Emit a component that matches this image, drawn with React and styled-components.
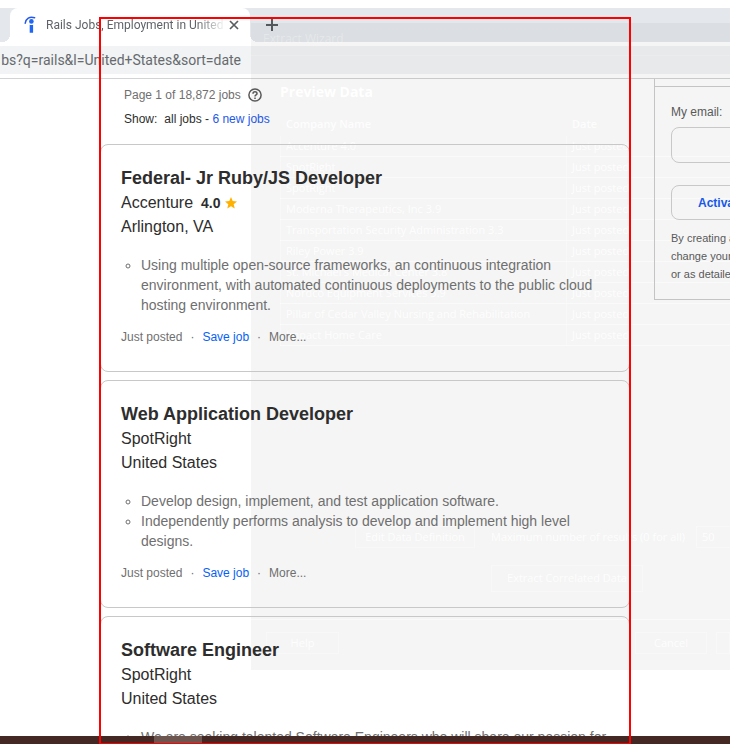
import React from "react";
import styled, { createGlobalStyle } from "styled-components";

const GlobalStyle = createGlobalStyle`
  *, *::before, *::after { box-sizing: border-box; }
  body {
    margin: 0;
    background: #fff;
    color: #2d2d2d;
    font-family: "Liberation Sans", Arial, sans-serif;
    overflow: hidden;
  }
  button, input { font: inherit; color: inherit; background: none; border: 0; padding: 0; margin: 0; }
  a { text-decoration: none; }
`;

const ui = `"Open Sans", "Noto Sans", sans-serif`;
const chrome = `Roboto, "Open Sans", sans-serif`;

const Screen = styled.div`
  position: relative;
  display: flex;
  flex-direction: column;
  height: 100vh;
  padding-top: 8px;
  overflow: hidden;
`;

const TabStrip = styled.header`
  display: flex;
  flex: none;
  align-items: stretch;
  height: 34px;
  padding-left: 10px;
  background: #e4e8ec;
`;

const Tab = styled.div`
  position: relative;
  display: flex;
  align-items: center;
  width: 240px;
  padding: 0 10px 0 14px;
  border-radius: 8px 8px 0 0;
  background: #fff;
  color: #5f6368;
  font: 12px ${chrome};

  &::before, &::after {
    content: "";
    position: absolute;
    bottom: 0;
    width: 8px;
    height: 8px;
  }
  &::before { right: 100%; background: radial-gradient(circle at 0 0, transparent 8px, #fff 8px); }
  &::after { left: 100%; background: radial-gradient(circle at 100% 0, transparent 8px, #fff 8px); }
`;

const TabTitle = styled.span`
  flex: 1;
  margin-left: 8px;
  overflow: hidden;
  white-space: nowrap;
  mask-image: linear-gradient(to right, #000 150px, transparent 180px);
`;

const IconButton = styled.button`
  display: flex;
  align-items: center;
  justify-content: center;
  width: ${(p) => p.$size}px;
  flex: none;
  color: #5a5d60;
`;

const NewTab = styled(IconButton)`
  margin-left: 11px;
`;

const Toolbar = styled.div`
  flex: none;
  padding: 4px 0;
  border-bottom: 1px solid #d2d3d5;
`;

const AddressBar = styled.div`
  height: 28px;
  background: #f1f3f4;
`;

const Address = styled.div`
  display: flex;
  justify-content: flex-end;
  width: 241px;
  overflow: hidden;
  color: #666a6e;
  font: 14px/28px ${chrome};
  white-space: nowrap;
`;

const Content = styled.div`
  position: relative;
  z-index: 1;
  display: flex;
  flex: 1;
  gap: 24px;
  min-height: 0;
  padding-left: 100px;
  overflow: hidden;
`;

const Results = styled.main`
  flex: none;
  width: 530px;
`;

const Summary = styled.div`
  padding: 4px 24px 12px;
  font-size: 12px;
`;

const SummaryLine = styled.div`
  display: flex;
  align-items: center;
  gap: 7px;
  color: ${(p) => (p.$muted ? "#6f6f6f" : "#2d2d2d")};
  line-height: ${(p) => (p.$muted ? 24 : 25)}px;
  white-space: pre;
`;

const Link = styled.a`
  color: ${(p) => (p.$bright ? "#085ff7" : "#2557e7")};
`;

const Jobs = styled.div`
  display: flex;
  flex-direction: column;
  gap: 8px;
`;

const Card = styled.article`
  padding: 21px 20px 24px;
  border: 1px solid #c8c8c8;
  border-radius: 8px;
`;

const Title = styled.h2`
  margin: 0 0 1px;
  font-size: 18px;
  line-height: 24px;
`;

const Line = styled.div`
  display: flex;
  align-items: center;
  font-size: 16px;
  line-height: 24px;
`;

const Rating = styled.span`
  display: flex;
  align-items: center;
  gap: 4px;
  margin-left: 8px;
  font-size: 14px;
  font-weight: bold;
`;

const Points = styled.ul`
  margin: 16px 0 12px;
  padding-left: 20px;
  color: #6f6f6f;
  font-size: 14px;
  line-height: 20px;
  list-style: circle;
`;

const Actions = styled.div`
  display: flex;
  gap: 8px;
  color: #6f6f6f;
  font-size: 12px;
  line-height: 20px;
`;

const Alerts = styled.aside`
  flex: none;
  width: 320px;
  align-self: flex-start;
  padding: 7px 0 0;
  border: 1px solid #c4c4c4;
  border-top: 0;
`;

const AlertForm = styled.form`
  display: flex;
  flex-direction: column;
  padding: 16px;
  border-top: 1px solid #c4c4c4;
  color: #595959;
  font-size: 12px;
`;

const EmailLabel = styled.label`
  margin-bottom: 6px;
  line-height: 18px;
`;

const EmailInput = styled.input`
  height: 36px;
  padding: 0 12px;
  border: 1px solid #c8c8c8;
  border-radius: 8px;
`;

const Activate = styled.button`
  height: 35px;
  margin: 22px 0 9px;
  padding-left: 26px;
  border: 1px solid #c8c8c8;
  border-radius: 8px;
  color: #1558ea;
  font-weight: bold;
  text-align: left;
`;

const Terms = styled.p`
  margin: 0;
  font-size: 11px;
  line-height: 18px;
  white-space: pre-line;
`;

const Taskbar = styled.footer`
  flex: none;
  height: 8px;
  padding-left: 154px;
  background: #432823;
`;

const TaskThumb = styled.div`
  width: 48px;
  height: 7px;
  background: #6d5650;
`;

const Selection = styled.div`
  position: absolute;
  z-index: 2;
  top: 17px;
  bottom: -1px;
  left: 99px;
  width: 532px;
  border: 2px solid #f00;
  pointer-events: none;
`;

/* Wizard window in the middle of its fade-out */
const Wizard = styled.section`
  position: absolute;
  top: 23px;
  left: 251px;
  right: 0;
  overflow: hidden;
  background: rgba(0, 0, 0, 0.04);
  color: rgba(255, 255, 255, 0.85);
  font: 11px/20px ${ui};
  white-space: nowrap;
  pointer-events: none;
`;

const WizardCaption = styled.div`
  height: 33px;
  padding: 6px 12px;
  border-bottom: 1px solid rgba(255, 255, 255, 0.15);
  color: rgba(255, 255, 255, 0.3);
  font-size: 12px;
`;

const WizardBody = styled.div`
  height: 564px;
  padding: 24px 0 0 29px;
  border-bottom: 1px solid rgba(255, 255, 255, 0.5);
`;

const WizardTitle = styled.h3`
  margin: 0 0 10px;
  font-size: 14px;
  line-height: 24px;
  color: #fff;
`;

const Preview = styled.table`
  width: 600px;
  height: 231px;
  border-collapse: collapse;
  table-layout: fixed;

  th, td {
    height: 21px;
    padding: 0 5px;
    border-bottom: 1px solid rgba(255, 255, 255, 0.5);
    border-left: 1px solid rgba(255, 255, 255, 0.3);
    line-height: 20px;
    text-align: left;
  }
  th { border-color: transparent; font-weight: 600; }
  th:first-child { width: 286px; }
`;

const WizardRow = styled.div`
  display: flex;
  align-items: center;
  padding-left: ${(p) => p.$indent}px;
  margin-top: ${(p) => p.$space}px;
`;

const WizardButton = styled.button`
  flex: none;
  width: ${(p) => p.$width}px;
  height: ${(p) => p.$height || 22}px;
  border: 1px solid rgba(255, 255, 255, 0.3);
`;

const ResultsLabel = styled.label`
  width: 205px;
  margin-left: 16px;
  flex: none;
`;

const ResultsInput = styled.input`
  width: 60px;
  height: 22px;
  padding-left: 5px;
  border: 1px solid rgba(255, 255, 255, 0.35);
`;

const WizardFooter = styled.div`
  display: flex;
  align-items: center;
  gap: 9px;
  height: 50px;
  padding: 0 0 5px 15px;
`;

const Spacer = styled.div`
  flex: 1;
`;

const jobs = [
  {
    title: "Federal- Jr Ruby/JS Developer",
    company: "Accenture",
    rating: "4.0",
    place: "Arlington, VA",
    points: [
      "Using multiple open-source frameworks, an continuous integration environment, with automated continuous deployments to the public cloud hosting environment.",
    ],
  },
  {
    title: "Web Application Developer",
    company: "SpotRight",
    place: "United States",
    points: [
      "Develop design, implement, and test application software.",
      "Independently performs analysis to develop and implement high level designs.",
    ],
  },
  {
    title: "Software Engineer",
    company: "SpotRight",
    place: "United States",
    points: ["We are seeking talented Software Engineers who will share our passion for"],
  },
];

const companies = [
  "Accenture 4.0",
  "SpotRight",
  "SpotRight",
  "Moderna Therapeutics, Inc 3.9",
  "Transportation Security Administration 3.3",
  "Riley Power 3.9",
  "St. Michael's Medical Center 3.8",
  "Nordco Equipment Services 3.9",
  "Pillar of Cedar Valley Nursing and Rehabilitation",
  "Impact Home Care",
];

function SiteIcon() {
  return (
    <svg width="14" height="18" viewBox="0 0 14 18" fill="none" aria-hidden="true">
      <path d="M1.200 7.200C1.600 2.800 5.800-.2 10.600 1.800" stroke="#2557e7" strokeWidth="1.500" strokeLinecap="round" />
      <circle cx="7.400" cy="5.400" r="2.300" fill="#1f66f5" />
      <path d="M5.700 8.700c1.100.5 2.300.5 3.400 0v8H5.700z" fill="#1f66f5" />
    </svg>
  );
}

function HelpIcon() {
  return (
    <svg width="14" height="14" viewBox="0 0 14 14" fill="none" stroke="#595959" strokeWidth="1.500" aria-hidden="true">
      <circle cx="7" cy="7" r="6.100" />
      <path d="M5 5.700c0-2.600 4-2.600 4 0C9 7 7 7 7 8.500" />
      <path d="M7 9.600v1.500" />
    </svg>
  );
}

function Star() {
  return (
    <svg width="12" height="12" viewBox="0 0 24 24" fill="#ffb100" aria-hidden="true">
      <path d="M12 0l3.400 8.200 8.600.7-6.600 5.600 2.100 8.500L12 18.400l-7.500 4.600 2.100-8.500L0 8.900l8.600-.7z" />
    </svg>
  );
}

function JobCard({ job }) {
  return (
    <Card>
      <Title>{job.title}</Title>
      <Line>
        {job.company}
        {job.rating && (
          <Rating>
            {job.rating}
            <Star />
          </Rating>
        )}
      </Line>
      <Line>{job.place}</Line>
      <Points>
        {job.points.map((point) => (
          <li key={point}>{point}</li>
        ))}
      </Points>
      <Actions>
        <span>Just posted</span>
        <span>·</span>
        <Link $bright href="#save">Save job</Link>
        <span>·</span>
        <span>More...</span>
      </Actions>
    </Card>
  );
}

function ExtractWizard() {
  return (
    <Wizard>
      <WizardCaption>Extract Wizard</WizardCaption>
      <WizardBody>
        <WizardTitle>Preview Data</WizardTitle>
        <Preview>
          <thead>
            <tr>
              <th>Company Name</th>
              <th>Date</th>
            </tr>
          </thead>
          <tbody>
            {companies.map((name, i) => (
              <tr key={i}>
                <td>{name}</td>
                <td>Just posted</td>
              </tr>
            ))}
          </tbody>
        </Preview>
        <WizardRow $indent={75} $space={180}>
          <WizardButton $width={120}>Edit Data Definition</WizardButton>
          <ResultsLabel htmlFor="max-results">Maximum number of results (0 for all)</ResultsLabel>
          <ResultsInput id="max-results" defaultValue="50" />
        </WizardRow>
        <WizardRow $indent={211} $space={17}>
          <WizardButton $width={152} $height={27}>Extract Correlated Data</WizardButton>
        </WizardRow>
      </WizardBody>
      <WizardFooter>
        <WizardButton $width={73}>Help</WizardButton>
        <Spacer />
        <WizardButton $width={72}>Cancel</WizardButton>
        <WizardButton $width={14} aria-label="Next" />
      </WizardFooter>
    </Wizard>
  );
}

export default function App() {
  return (
    <Screen>
      <GlobalStyle />
      <TabStrip>
        <Tab>
          <SiteIcon />
          <TabTitle>Rails Jobs, Employment in United</TabTitle>
          <IconButton $size={12} aria-label="Close tab">
            <svg width="10" height="10" viewBox="0 0 10 10" stroke="currentColor" strokeWidth="1.700">
              <path d="M1 1l8 8M9 1L1 9" />
            </svg>
          </IconButton>
        </Tab>
        <NewTab $size={22} aria-label="New tab">
          <svg width="12" height="12" viewBox="0 0 12 12" stroke="currentColor" strokeWidth="2">
            <path d="M6 0v12M0 6h12" />
          </svg>
        </NewTab>
      </TabStrip>
      <Toolbar>
        <AddressBar>
          <Address>bs?q=rails&amp;l=United+States&amp;sort=date</Address>
        </AddressBar>
      </Toolbar>
      <Content>
        <Results>
          <Summary>
            <SummaryLine $muted>
              Page 1 of 18,872 jobs
              <HelpIcon />
            </SummaryLine>
            <SummaryLine>
              <span>Show:</span>
              <span>
                all jobs - <Link href="#new">6 new jobs</Link>
              </span>
            </SummaryLine>
          </Summary>
          <Jobs>
            {jobs.map((job) => (
              <JobCard key={job.title} job={job} />
            ))}
          </Jobs>
        </Results>
        <Alerts>
          <AlertForm>
            <EmailLabel htmlFor="email">My email:</EmailLabel>
            <EmailInput id="email" type="email" />
            <Activate type="button">Activate</Activate>
            <Terms>{"By creating a\nchange your\nor as detailed"}</Terms>
          </AlertForm>
        </Alerts>
      </Content>
      <Taskbar>
        <TaskThumb />
      </Taskbar>
      <ExtractWizard />
      <Selection />
    </Screen>
  );
}
